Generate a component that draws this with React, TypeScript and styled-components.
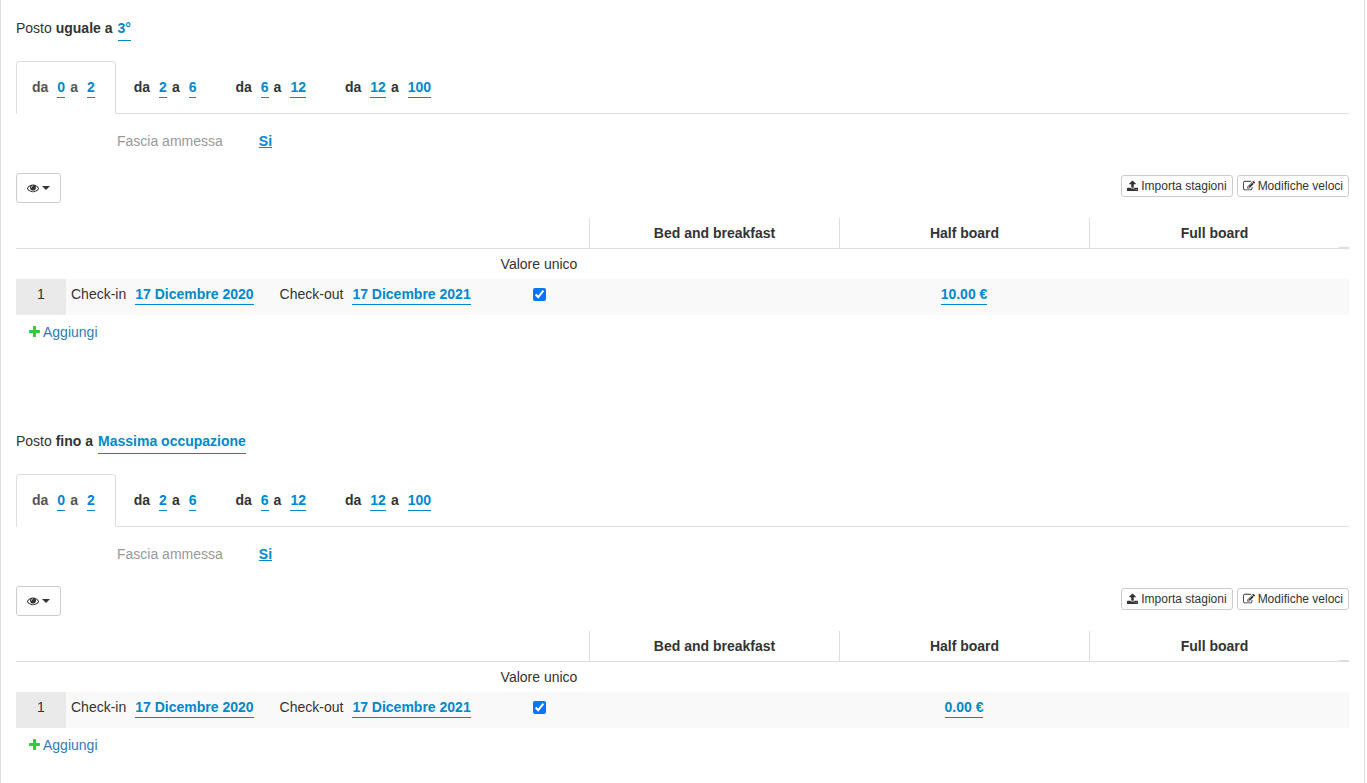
import React, { useId } from "react";
import styled, { createGlobalStyle } from "styled-components";

const GlobalStyle = createGlobalStyle`
  *, *::before, *::after { box-sizing: border-box; }
  body {
    margin: 0;
    background: #fff;
    color: #333;
    font: 14px/20px "Liberation Sans", Arial, sans-serif;
  }
`;

const Page = styled.main`
  margin-right: 2px;
  min-height: 100vh;
  padding: 18px 15px 0;
  border: 1px solid #ddd;
  border-width: 0 1px;
`;

const Section = styled.section`
  padding-bottom: 89px;
  &:last-child { padding-bottom: 0; }
`;

const Title = styled.h2`
  display: flex;
  gap: 5px;
  margin: 0 0 20px;
  font-size: 14px;
  line-height: 20px;
  font-weight: normal;
`;

const Editable = styled.a<{ $drop?: number }>`
  display: inline-block;
  padding-bottom: ${(p) => p.$drop ?? 0}px;
  border-bottom: 1px solid #08c;
  color: #08c;
  font-weight: bold;
  text-decoration: none;
`;

const Tabs = styled.nav`
  display: flex;
  border-bottom: 1px solid #ddd;
`;

const Tab = styled.div<{ $active?: boolean }>`
  display: flex;
  margin: 0 2px -1px 0;
  padding: 15px 20px 15px 15px;
  border: 1px solid ${(p) => (p.$active ? "#ddd" : "transparent")};
  border-bottom-color: ${(p) => (p.$active ? "#fff" : "transparent")};
  border-radius: 4px 4px 0 0;
  color: ${(p) => (p.$active ? "#555" : "#333")};
  font-weight: bold;
`;

const Word = styled.span`
  margin-right: 9px;
`;

const From = styled(Editable)`
  margin-right: 5px;
`;

const Allowed = styled.div`
  display: flex;
  gap: 36px;
  padding: 17px 0 0 101px;
  color: #999;
`;

const YesLink = styled.a`
  color: #08c;
  font-weight: bold;
`;

const Toolbar = styled.div`
  display: flex;
  justify-content: space-between;
  align-items: flex-start;
  margin: 22px 0 15px;
`;

const Actions = styled.div`
  display: flex;
  gap: 4px;
  padding-top: 2px;
`;

const Button = styled.button<{ $large?: boolean }>`
  display: flex;
  align-items: center;
  gap: 3px;
  height: ${(p) => (p.$large ? 30 : 22)}px;
  padding: ${(p) => (p.$large ? "0 10px" : "0 5px")};
  border: 1px solid #ccc;
  border-radius: 3px;
  background: #fff;
  color: #333;
  font: 12px/18px "Liberation Sans", Arial, sans-serif;
  white-space: nowrap;
`;

const Caret = styled.span`
  border: 4px solid transparent;
  border-top-color: currentColor;
  border-bottom: 0;
`;

const Table = styled.table`
  width: 100%;
  table-layout: fixed;
  border-collapse: separate;
  border-spacing: 0;
`;

const Col = styled.col<{ $width?: number }>`
  width: ${(p) => (p.$width ? `${p.$width}px` : "auto")};
`;

const Head = styled.th<{ $board?: boolean }>`
  height: 31px;
  padding: 0;
  border-bottom: 1px solid #ddd;
  border-left: ${(p) => (p.$board ? "1px solid #ddd" : "0")};
  font-weight: bold;
`;

const HeadEnd = styled(Head)`
  border-bottom-width: 2px;
`;

const SubHead = styled.td`
  height: 30px;
  padding: 0;
  text-align: center;
`;

const Cell = styled.td<{ $index?: boolean; $left?: boolean }>`
  height: 36px;
  padding: ${(p) => (p.$left ? "5px 0 0 5px" : "5px 0 0")};
  background: ${(p) => (p.$index ? "#eaeaea" : "#f9f9f9")};
  text-align: ${(p) => (p.$left ? "left" : "center")};
  vertical-align: top;
  white-space: nowrap;
`;

const Period = styled.span`
  display: inline-flex;
  gap: 9px;
  margin-right: 26px;
`;

const Check = styled.input`
  display: block;
  width: 13px;
  height: 13px;
  margin: 4px auto 0;
  accent-color: #0075ff;
`;

const Add = styled.a`
  display: flex;
  align-items: center;
  gap: 3px;
  width: fit-content;
  margin: 7px 0 0 13px;
  color: #337ab7;
  text-decoration: none;
  svg { color: #2ecc40; }
`;

type Glyph = { left: number; width: number; path: string };

const ICONS: Record<"eye" | "upload" | "edit" | "plus", Glyph> = {
  eye: {
    left: 0,
    width: 1792,
    path: "M1664 960q-152-236-381-353 61 104 61 225 0 185-131.500 316.500t-316.500 131.500-316.500-131.500-131.500-316.500q0-121 61-225-229 117-381 353 133 205 333.500 326.500t434.500 121.500 434.500-121.500 333.500-326.500zM944 576q0-20-14-34t-34-14q-125 0-214.500 89.500t-89.500 214.500q0 20 14 34t34 14 34-14 14-34q0-86 61-147t147-61q20 0 34-14t14-34zM1792 960q0 34-20 69-140 230-376.500 368.500t-499.500 138.500-499.500-139-376.500-368q-20-35-20-69t20-69q140-229 376.500-368t499.500-139 499.500 139 376.500 368q20 35 20 69z",
  },
  upload: {
    left: 64,
    width: 1664,
    path: "M1344 1472q0-26-19-45t-45-19-45 19-19 45 19 45 45 19 45-19 19-45zm256 0q0-26-19-45t-45-19-45 19-19 45 19 45 45 19 45-19 19-45zm128-224v320q0 40-28 68t-68 28h-1472q-40 0-68-28t-28-68v-320q0-40 28-68t68-28h427q21 56 70.500 92t110.500 36h256q61 0 110.500-36t70.500-92h427q40 0 68 28t28 68zm-325-648q-17 40-59 40h-256v448q0 26-19 45t-45 19h-256q-26 0-45-19t-19-45v-448h-256q-42 0-59-40-17-39 14-69l448-448q18-19 45-19t45 19l448 448q31 30 14 69z",
  },
  edit: {
    left: 0,
    width: 1792,
    path: "M888 1184l116-116-152-152-116 116v56h96v96h56zm440-720q-16-16-33 1l-350 350q-17 17-1 33t33-1l350-350q17-17 1-33zm80 594v190q0 119-84.500 203.500t-203.500 84.500h-832q-119 0-203.500-84.500t-84.500-203.500v-832q0-119 84.500-203.500t203.500-84.500h832q63 0 117 25 15 7 18 23 3 17-9 29l-49 49q-14 14-32 8-23-6-45-6h-832q-66 0-113 47t-47 113v832q0 66 47 113t113 47h832q66 0 113-47t47-113v-126q0-13 9-22l64-64q15-15 35-7t20 29zm-96-738l288 288-672 672h-288v-288zm444 132l-92 92-288-288 92-92q28-28 68-28t68 28l152 152q28 28 28 68t-28 68z",
  },
  plus: {
    left: 192,
    width: 1408,
    path: "M1600 736v192q0 40-28 68t-68 28h-416v416q0 40-28 68t-68 28h-192q-40 0-68-28t-28-68v-416h-416q-40 0-68-28t-28-68v-192q0-40 28-68t68-28h416v-416q0-40 28-68t68-28h192q40 0 68 28t28 68v416h416q40 0 68 28t28 68z",
  },
};

function Icon({ name, size }: { name: keyof typeof ICONS; size: number }) {
  const { left, width, path } = ICONS[name];
  return (
    <svg
      width={Math.round((size * width) / 1792)}
      height={size}
      viewBox={`${left} 0 ${width} 1792`}
      fill="currentColor"
      aria-hidden="true"
    >
      <path d={path} />
    </svg>
  );
}

const AGES = [[0, 2], [2, 6], [6, 12], [12, 100]];
const BOARDS = ["Bed and breakfast", "Half board", "Full board"];

type RuleProps = { condition: string; place: string; prices: (string | null)[] };

function Rule({ condition, place, prices }: RuleProps) {
  const labelId = useId();
  return (
    <Section>
      <Title>
        <span>Posto <b>{condition}</b></span>
        <Editable href="#" $drop={2}>{place}</Editable>
      </Title>
      <Tabs>
        {AGES.map(([from, to], i) => (
          <Tab key={from} $active={i === 0}>
            <Word>da</Word>
            <From href="#">{from}</From>
            <Word>a</Word>
            <Editable href="#">{to}</Editable>
          </Tab>
        ))}
      </Tabs>
      <Allowed>
        <span>Fascia ammessa</span>
        <YesLink href="#">Si</YesLink>
      </Allowed>
      <Toolbar>
        <Button $large type="button" aria-label="Colonne visibili">
          <Icon name="eye" size={12} />
          <Caret />
        </Button>
        <Actions>
          <Button type="button"><Icon name="upload" size={12} />Importa stagioni</Button>
          <Button type="button"><Icon name="edit" size={12} />Modifiche veloci</Button>
        </Actions>
      </Toolbar>
      <Table>
        <colgroup>
          <Col $width={50} />
          <Col />
          <Col $width={100} />
          {BOARDS.map((b) => <Col key={b} $width={250} />)}
          <Col $width={10} />
        </colgroup>
        <thead>
          <tr>
            <Head colSpan={3} />
            {BOARDS.map((b) => <Head key={b} $board scope="col">{b}</Head>)}
            <HeadEnd />
          </tr>
        </thead>
        <tbody>
          <tr>
            <SubHead colSpan={2} />
            <SubHead id={labelId}>Valore unico</SubHead>
            <SubHead colSpan={4} />
          </tr>
          <tr>
            <Cell $index>1</Cell>
            <Cell $left>
              <Period>Check-in <Editable href="#">17 Dicembre 2020</Editable></Period>
              <Period>Check-out <Editable href="#">17 Dicembre 2021</Editable></Period>
            </Cell>
            <Cell><Check type="checkbox" defaultChecked aria-labelledby={labelId} /></Cell>
            {prices.map((price, i) => (
              <Cell key={BOARDS[i]}>{price && <Editable href="#">{price}</Editable>}</Cell>
            ))}
            <Cell />
          </tr>
        </tbody>
      </Table>
      <Add href="#"><Icon name="plus" size={14} />Aggiungi</Add>
    </Section>
  );
}

export default function App() {
  return (
    <>
      <GlobalStyle />
      <Page>
        <Rule condition="uguale a" place="3°" prices={[null, "10.00 €", null]} />
        <Rule condition="fino a" place="Massima occupazione" prices={[null, "0.00 €", null]} />
      </Page>
    </>
  );
}
